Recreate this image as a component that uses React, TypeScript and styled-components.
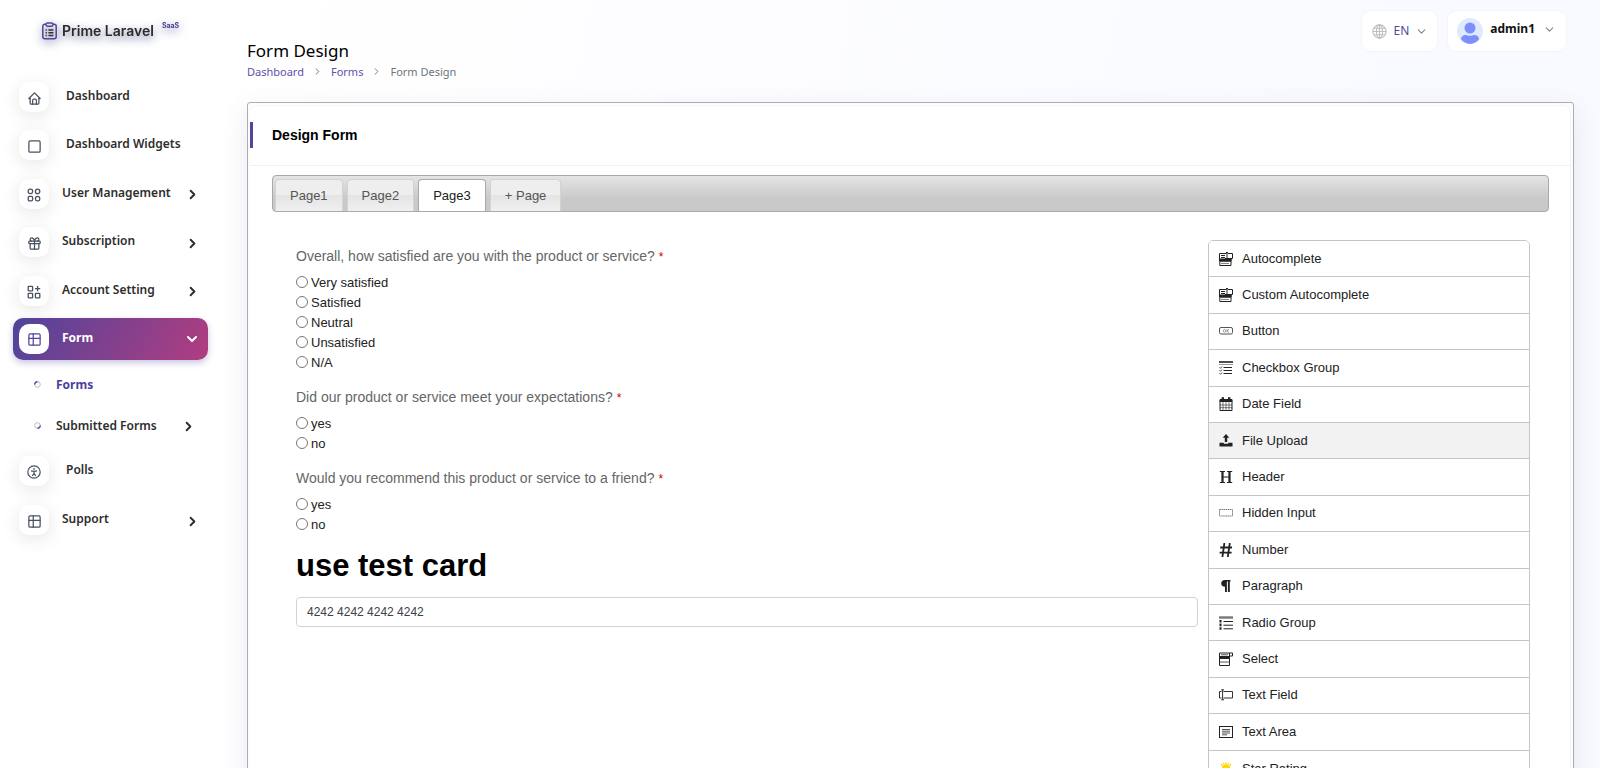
import React from "react";
import styled, { createGlobalStyle, css } from "styled-components";
import { TbHome, TbSquare, TbGift, TbTable, TbChevronRight, TbChevronDown } from "react-icons/tb";

const ui = `"Noto Sans", sans-serif`;
const form = `"Liberation Sans", Arial, sans-serif`;

const GlobalStyle = createGlobalStyle`
  *, *::before, *::after { box-sizing: border-box; }
  html { scrollbar-width: none; }
  body {
    margin: 0;
    min-height: 100vh;
    font: 13px/20px ${ui};
    color: #293240;
    background: linear-gradient(100deg, #fff 220px, #f9faff 80%);
  }
  a { text-decoration: none; color: inherit; }
  button { font: inherit; color: inherit; border: 0; background: none; padding: 0; cursor: pointer; }
  ul { list-style: none; margin: 0; padding: 0; }
  h1, h2, h3 { margin: 0; }
`;

const Shell = styled.div`
  display: flex;
  align-items: stretch;
  min-height: 100vh;
`;

/* ---------- sidebar ---------- */
const Sidebar = styled.aside`
  flex: 0 0 221px;
  padding: 16px 13px;
  background: #fff;
`;
const Brand = styled.a`
  display: flex;
  align-items: center;
  height: 30px;
  margin: 0 0 30px 29px;
  filter: drop-shadow(0 3px 5px rgba(35, 50, 110, 0.7));
`;
const BrandName = styled.span`
  margin-left: 5px;
  font: 600 14px/20px Inter, sans-serif;
  color: #2b2b2b;
`;
const BrandTag = styled.span`
  align-self: flex-start;
  margin-left: 8px;
  font: 700 7px/20px Inter, sans-serif;
  color: #51459e;
`;
const Nav = styled.ul<{ $min: number }>`
  display: grid;
  align-content: space-between;
  min-height: ${(p) => p.$min}px;
`;
const NavLink = styled.a<{ $active?: boolean; $leaf?: boolean }>`
  display: flex;
  align-items: center;
  height: 42px;
  padding: 0 8px 0 6px;
  border-radius: 10px;
  font-size: 12px;
  font-weight: 600;
  color: #2d2d2d;
  ${(p) =>
    p.$active &&
    css`
      color: #fff;
      font-weight: 700;
      background: linear-gradient(120deg, #4f449c, #b13d80);
      box-shadow: 0 3px 6px rgba(79, 68, 156, 0.3);
    `}
  & > span:nth-child(2) {
    flex: 1;
    margin-left: ${(p) => (p.$leaf ? 17 : 13)}px;
    padding-bottom: 2px;
  }
`;
const Arrow = styled(TbChevronRight)`
  width: 15px;
  height: 17px;
  padding-top: 2px;
  stroke-width: 3;
`;
const IconTile = styled.span<{ $active?: boolean }>`
  display: flex;
  align-items: center;
  justify-content: center;
  width: 30px;
  height: 30px;
  padding-top: 2px;
  border-radius: 10px;
  background: #fff;
  color: ${(p) => (p.$active ? "#51459e" : "#4a5160")};
  box-shadow: 0 4px 18px rgba(0, 0, 0, ${(p) => (p.$active ? 0 : 0.1)});
`;
const SubNav = styled.ul`
  padding: 4px 12px 4px 21px;
`;
const SubLink = styled.a<{ $active?: boolean }>`
  display: flex;
  align-items: center;
  height: 41px;
  font-size: 12px;
  font-weight: ${(p) => (p.$active ? 700 : 600)};
  color: ${(p) => (p.$active ? "#4b3fa0" : "#2d2d2d")};
  & > span {
    flex: 1;
    margin-left: 15px;
  }
`;

/* ---------- main ---------- */
const Main = styled.main`
  flex: 1;
  min-width: 0;
  padding: 10px 26px 26px;
`;
const TopBar = styled.header`
  display: flex;
  justify-content: space-between;
  align-items: flex-start;
  height: 92px;
`;
const PageTitle = styled.h1`
  padding-top: 28px;
  font-size: 17px;
  font-weight: 400;
  line-height: 26px;
  color: #000;
`;
const Crumbs = styled.nav`
  display: flex;
  align-items: center;
  gap: 8px;
  font-size: 11px;
  line-height: 15px;
  color: #6c757d;
  a { color: #5d50ad; }
`;
const TopActions = styled.div`
  display: flex;
  gap: 9px;
  margin-right: 7px;
`;
const Chip = styled.button<{ $user?: boolean }>`
  display: flex;
  align-items: center;
  height: 42px;
  padding: ${(p) => (p.$user ? "0 10px 0 9px" : "0 9px 0 10px")};
  gap: ${(p) => (p.$user ? 7 : 6)}px;
  border: 1px solid #f4f5fa;
  border-radius: 10px;
  background: #fff;
  font-size: 12px;
  color: #51459e;
  svg:last-child {
    margin-bottom: ${(p) => (p.$user ? 4 : 0)}px;
    color: #7d8690;
  }
`;
const UserName = styled.strong`
  padding: 0 1px 4px 0;
  font-size: 12px;
  font-weight: 700;
  color: #111;
`;

const Card = styled.section`
  padding: 2px;
  border: 1px solid #aaaeb3;
  border-radius: 3px;
  background: #fcfcfd;
  box-shadow: 0 8px 26px rgba(80, 90, 150, 0.12);
`;
const CardBody = styled.div`
  min-height: 720px;
  border: 1px solid #f6f6f8;
  border-left-width: 0;
  border-radius: 8px;
  background: #fff;
  font-family: ${form};
`;
const CardHeader = styled.div`
  display: flex;
  align-items: center;
  height: 60px;
  padding-bottom: 2px;
  border-bottom: 1px solid #f1f1f1;
`;
const CardTitle = styled.h2`
  padding-left: 19px;
  border-left: 3px solid #51459e;
  font-size: 14px;
  line-height: 26px;
  color: #000;
`;
const TabBar = styled.div`
  display: flex;
  align-items: flex-end;
  gap: 4px;
  height: 37px;
  margin: 9px 21px 28px 22px;
  padding: 0 2px;
  border: 1px solid #aaa;
  border-radius: 4px;
  background: linear-gradient(#e4e4e4, #c9c9c9 65%);
`;
const Tab = styled.button<{ $active?: boolean }>`
  height: 32px;
  padding: 0 14px;
  border: 1px solid ${(p) => (p.$active ? "#aaa" : "#d3d3d3")};
  border-bottom: 0;
  border-radius: 4px 4px 0 0;
  background: ${(p) => (p.$active ? "#fff" : "linear-gradient(#eee 50%, #e4e4e4 50%, #f0f0f0)")};
  color: ${(p) => (p.$active ? "#212121" : "#555")};
`;
const Builder = styled.div`
  display: flex;
  align-items: flex-start;
  gap: 10px;
  margin: 0 40px 20px 46px;
`;
const Stage = styled.form`
  flex: 1;
  min-width: 0;
  padding-top: 6px;
`;
const Question = styled.fieldset`
  margin: 0 0 14px;
  padding: 0;
  border: 0;
  legend {
    padding: 0;
    margin-bottom: 6px;
    font-size: 14px;
    color: #666;
  }
`;
const Required = styled.span`
  margin-left: 4px;
  font-size: 12px;
  color: #c00;
`;
const Choice = styled.label`
  display: flex;
  align-items: center;
  height: 20px;
  color: #222;
  input {
    width: 12px;
    height: 12px;
    margin: 0 3px 2px 0;
  }
`;
const StageHeading = styled.h3`
  margin: 0 0 14px;
  font-size: 31px;
  line-height: 34px;
  color: #000;
`;
const TextInput = styled.input`
  display: block;
  width: 100%;
  height: 30px;
  padding: 0 10px;
  border: 1px solid #ced4da;
  border-radius: 4px;
  background: #fff;
  font: 12px/20px ${form};
  color: #3b4148;
`;
const Palette = styled.ul`
  flex: 0 0 322px;
  display: grid;
  grid-auto-rows: 1fr;
  min-height: 548px;
  border: 1px solid #c5c5c5;
  border-radius: 5px;
  overflow: hidden;
`;
const PaletteItem = styled.li<{ $hover?: boolean }>`
  display: flex;
  background: ${(p) => (p.$hover ? "#f2f2f2" : "#fff")};
  &:not(:last-child) { border-bottom: 1px solid #c5c5c5; }
  button {
    flex: 1;
    display: flex;
    align-items: center;
    gap: 9px;
    padding-left: 10px;
    color: #222;
  }
`;

/* ---------- drawings ---------- */
const Glyph = ({ children, size = 14, color = "#222" }: { children: React.ReactNode; size?: number; color?: string }) => (
  <svg width={size} height={size} viewBox="0 0 14 14" fill="none" stroke={color} strokeWidth="1" aria-hidden="true">
    {children}
  </svg>
);

const Clipboard = () => (
  <svg width="15" height="18" viewBox="0 0 15 18" fill="none" stroke="#51459e" strokeWidth="1.5" aria-hidden="true">
    <path d="M4 2.200H2.800a2 2 0 0 0-2 2v10.600a2 2 0 0 0 2 2h9.400a2 2 0 0 0 2-2V4.200a2 2 0 0 0-2-2H11" />
    <rect x="4" y="1" width="7" height="3.2" rx="1.4" />
    <path stroke="#333" d="M3.600 8h1.300M3.600 10.800h1.300M3.600 13.600h1.300M6.400 8h5M6.400 10.800h5M6.400 13.600h5" />
  </svg>
);
const FourShapes = () => (
  <Glyph color="currentColor">
    <g strokeWidth="1.3">
      <rect x="1.2" y="1.2" width="4.4" height="4.4" rx="1.8" />
      <circle cx="10.6" cy="3.4" r="2.2" />
      <rect x="1.2" y="8.4" width="4.4" height="4.4" rx="1.2" />
      <path d="M10.600 8.400c1.400 0 2.200 1.200 2.200 2.600 0 1.200-.6 1.800-1.600 1.800h-1.200c-1 0-1.600-.6-1.600-1.800 0-1.400.8-2.600 2.200-2.600z" />
    </g>
  </Glyph>
);
const SquaresPlus = () => (
  <Glyph color="currentColor">
    <g strokeWidth="1.3">
      <rect x="1.2" y="1.4" width="4.4" height="4.4" rx=".6" />
      <rect x="1.2" y="8.4" width="4.4" height="4.4" rx=".6" />
      <rect x="8.4" y="8.4" width="4.4" height="4.4" rx=".6" />
      <path d="M10.600 1v5.200M8 3.600h5.200" />
    </g>
  </Glyph>
);
const Person = () => (
  <Glyph color="currentColor">
    <circle cx="7" cy="7" r="6.2" strokeWidth="1.2" />
    <circle cx="7" cy="3.8" r=".9" fill="currentColor" stroke="none" />
    <path d="M4 5.800l3 .6 3-.6M7 6.400v2M5.200 11L7 8.300 8.800 11" strokeWidth="1.2" />
  </Glyph>
);
const Spinner = ({ turn }: { turn: number }) => (
  <svg width="7" height="7" viewBox="0 0 7 7" fill="none" aria-hidden="true">
    <circle cx="3.5" cy="3.5" r="2.8" stroke="#b9b9ca" />
    <path d="M.7 3.500A2.800 2.800 0 0 1 3.500.7" stroke="#51459e" strokeWidth="1.4" transform={`rotate(${turn} 3.5 3.5)`} />
  </svg>
);
const Globe = () => (
  <Glyph size={15} color="#bdbdbd">
    <circle cx="7" cy="7" r="6.2" />
    <ellipse cx="7" cy="7" rx="2.8" ry="6.2" />
    <path d="M7 .8v12.400M.8 7h12.400M1.800 4h10.400M1.800 10h10.400" />
  </Glyph>
);
const Avatar = () => (
  <svg width="26" height="26" viewBox="0 0 26 26" aria-hidden="true">
    <circle cx="13" cy="13" r="13" fill="#e1eafc" />
    <circle cx="13" cy="10" r="5.5" fill="#7c8ffb" />
    <path d="M4 21.200c0-2.500 2-4.200 4.500-4.200 1.500 0 2.500.8 4.500.8s3-.8 4.500-.8c2.500 0 4.500 1.700 4.500 4.200A13 13 0 0 1 13 26a13 13 0 0 1-9-4.800z" fill="#7c8ffb" />
  </svg>
);

const icons = {
  auto: (
    <Glyph>
      <path d="M.5 1.500h7M.5 1.500v6.500M2 3.500h4M2 5.500h4M7 .5h2M8 .5v7M9 1.500h4.500v5H6M12 6.500v7H.8v-4" />
      <path d="M.5 7h11.500v2.200H.5z" fill="#222" />
      <path d="M2 11.400h8" stroke="#777" />
    </Glyph>
  ),
  button: (
    <Glyph>
      <rect x=".5" y="3.5" width="13" height="6.5" rx="1.5" stroke="#555" />
      <g stroke="#888" strokeWidth=".8">
        <ellipse cx="5.5" cy="6.8" rx="1.2" ry="1.4" />
        <path d="M8 5.200v3.200M10 5.200L8.200 6.800 10 8.400" />
      </g>
    </Glyph>
  ),
  checks: (
    <Glyph>
      <path d="M0 1h14" strokeWidth="1.6" />
      <path d="M0 3.500h14" stroke="#999" />
      <path d="M4.500 6.500H13M4.500 9.500H13M4.500 12.500H13" />
      <path d="M.5 6.300l1 1L3 5.500M.5 9.300l1 1L3 8.500M.5 12.300l1 1L3 11.500" strokeWidth=".8" />
    </Glyph>
  ),
  date: (
    <Glyph>
      <path d="M1 2.500h12v2H1z" fill="#222" />
      <path d="M1 3.500h12v10H1z" />
      <path d="M4 5v8M7 5v8M10 5v8M1 8h12M1 10.700h12" strokeWidth=".6" />
      <path d="M3.800 .2v3M10.200 .2v3" strokeWidth="2.4" />
    </Glyph>
  ),
  upload: (
    <Glyph>
      <path d="M7 0l3.300 3.800H8.200V8H5.800V3.800H3.700zM.5 8.800h4.300v1h4.400v-1h4.300v3.700H.5z" fill="#222" stroke="none" />
    </Glyph>
  ),
  header: (
    <Glyph>
      <path d="M3.500 1.500v11M10.500 1.500v11" strokeWidth="2.2" />
      <path d="M.8 1.500h5.200M8 1.500h5.200M.8 12.500h5.200M8 12.500h5.200M4 7h6" strokeWidth="1.2" />
    </Glyph>
  ),
  hidden: (
    <Glyph>
      <rect x=".5" y="3.5" width="13" height="6.5" stroke="#777" strokeDasharray="1.5 .6" />
    </Glyph>
  ),
  number: (
    <Glyph>
      <path d="M5.400 0L3.400 14M10.800 0L8.800 14M1.200 4.500H13M.6 9.600h12" strokeWidth="1.8" />
    </Glyph>
  ),
  paragraph: (
    <Glyph>
      <path d="M11.500 1H6C3.500 1 2.200 2.600 2.200 4.400S3.500 7.800 6 7.800v5.200h1.900V2.500h1V13h1.900V2.500h.7z" fill="#222" stroke="none" />
    </Glyph>
  ),
  radios: (
    <Glyph>
      <path d="M0 1.500h14" stroke="#777" strokeWidth="2.4" />
      <path d="M4.500 5.500H14M4.500 9.200H14M4.500 12.800H14" />
      <path d="M1.500 4v10" strokeDasharray="2.6 1" strokeWidth="2" />
    </Glyph>
  ),
  select: (
    <Glyph>
      <path d="M.5 1h13v3H10.500v9.500H.5zM10.500 1v3" />
      <path d="M.5 4.500h10v2H.5z" fill="#222" />
      <path d="M.5 10h10M2 2.800h7" stroke="#555" />
    </Glyph>
  ),
  text: (
    <Glyph>
      <path d="M2.500 3.500h-2v6.500h2M4.500 3.500h9v6.500h-9M2.200 1.800h2.800M2.200 11.800h2.800M3.600 1.800v10" stroke="#333" />
    </Glyph>
  ),
  area: (
    <Glyph>
      <rect x=".5" y="1.5" width="13" height="11" />
      <path d="M3 4.500h8M3 6.200h8M3 8h8M3 9.800h5" stroke="#555" />
    </Glyph>
  ),
  star: (
    <Glyph>
      <circle cx="7" cy="7" r="4.4" fill="#fcd90a" stroke="none" />
      <path d="M7 0v14M0 7h14M2 2l10 10M12 2L2 12M4.300 .6l5.400 12.800M9.700 .6L4.300 13.400" stroke="#fcd90a" strokeWidth="1.1" />
    </Glyph>
  ),
};

/* ---------- data ---------- */
type Item = { label: string; icon: React.ReactNode; leaf?: boolean; active?: boolean };

const topItems: Item[] = [
  { label: "Dashboard", icon: <TbHome size={15} />, leaf: true },
  { label: "Dashboard Widgets", icon: <TbSquare size={15} />, leaf: true },
  { label: "User Management", icon: <FourShapes /> },
  { label: "Subscription", icon: <TbGift size={15} /> },
  { label: "Account Setting", icon: <SquaresPlus /> },
  { label: "Form", icon: <TbTable size={15} />, active: true },
];
const bottomItems: Item[] = [
  { label: "Polls", icon: <Person />, leaf: true },
  { label: "Support", icon: <TbTable size={15} /> },
];
const questions = [
  { text: "Overall, how satisfied are you with the product or service?", options: ["Very satisfied", "Satisfied", "Neutral", "Unsatisfied", "N/A"] },
  { text: "Did our product or service meet your expectations?", options: ["yes", "no"] },
  { text: "Would you recommend this product or service to a friend?", options: ["yes", "no"] },
];
const controls: [string, React.ReactNode][] = [
  ["Autocomplete", icons.auto],
  ["Custom Autocomplete", icons.auto],
  ["Button", icons.button],
  ["Checkbox Group", icons.checks],
  ["Date Field", icons.date],
  ["File Upload", icons.upload],
  ["Header", icons.header],
  ["Hidden Input", icons.hidden],
  ["Number", icons.number],
  ["Paragraph", icons.paragraph],
  ["Radio Group", icons.radios],
  ["Select", icons.select],
  ["Text Field", icons.text],
  ["Text Area", icons.area],
  ["Star Rating", icons.star],
];

const NavItems = ({ items }: { items: Item[] }) => (
  <>
    {items.map((item) => (
      <li key={item.label}>
        <NavLink href="#" $active={item.active} $leaf={item.leaf}>
          <IconTile $active={item.active}>{item.icon}</IconTile>
          <span>{item.label}</span>
          {!item.leaf && (item.active ? <TbChevronDown size={16} strokeWidth={3} /> : <Arrow />)}
        </NavLink>
      </li>
    ))}
  </>
);

export default function App() {
  return (
    <>
      <GlobalStyle />
      <Shell>
        <Sidebar>
          <Brand href="#">
            <Clipboard />
            <BrandName>Prime Laravel</BrandName>
            <BrandTag>SaaS</BrandTag>
          </Brand>
          <Nav $min={284}>
            <NavItems items={topItems} />
          </Nav>
          <SubNav>
            <li>
              <SubLink href="#" $active>
                <Spinner turn={0} />
                <span>Forms</span>
              </SubLink>
            </li>
            <li>
              <SubLink href="#">
                <Spinner turn={180} />
                <span>Submitted Forms</span>
                <Arrow />
              </SubLink>
            </li>
          </SubNav>
          <Nav $min={91}>
            <NavItems items={bottomItems} />
          </Nav>
        </Sidebar>
        <Main>
          <TopBar>
            <div>
              <PageTitle>Form Design</PageTitle>
              <Crumbs aria-label="Breadcrumb">
                <a href="#">Dashboard</a>
                <TbChevronRight />
                <a href="#">Forms</a>
                <TbChevronRight />
                <span>Form Design</span>
              </Crumbs>
            </div>
            <TopActions>
              <Chip type="button" aria-haspopup="menu">
                <Globe />
                <span>EN</span>
                <TbChevronDown size={13} />
              </Chip>
              <Chip type="button" aria-haspopup="menu" $user>
                <Avatar />
                <UserName>admin1</UserName>
                <TbChevronDown size={13} />
              </Chip>
            </TopActions>
          </TopBar>
          <Card>
            <CardBody>
              <CardHeader>
                <CardTitle>Design Form</CardTitle>
              </CardHeader>
              <TabBar role="tablist">
                {["Page1", "Page2", "Page3", "+ Page"].map((name) => (
                  <Tab key={name} type="button" role="tab" aria-selected={name === "Page3"} $active={name === "Page3"}>
                    {name}
                  </Tab>
                ))}
              </TabBar>
              <Builder>
                <Stage>
                  {questions.map((q, i) => (
                    <Question key={q.text}>
                      <legend>
                        {q.text}
                        <Required>*</Required>
                      </legend>
                      {q.options.map((option) => (
                        <Choice key={option}>
                          <input type="radio" name={`question-${i}`} value={option} />
                          {option}
                        </Choice>
                      ))}
                    </Question>
                  ))}
                  <StageHeading id="card-heading">use test card</StageHeading>
                  <TextInput aria-labelledby="card-heading" defaultValue="4242 4242 4242 4242" />
                </Stage>
                <Palette>
                  {controls.map(([label, icon]) => (
                    <PaletteItem key={label} $hover={label === "File Upload"}>
                      <button type="button">
                        {icon}
                        {label}
                      </button>
                    </PaletteItem>
                  ))}
                </Palette>
              </Builder>
            </CardBody>
          </Card>
        </Main>
      </Shell>
    </>
  );
}
